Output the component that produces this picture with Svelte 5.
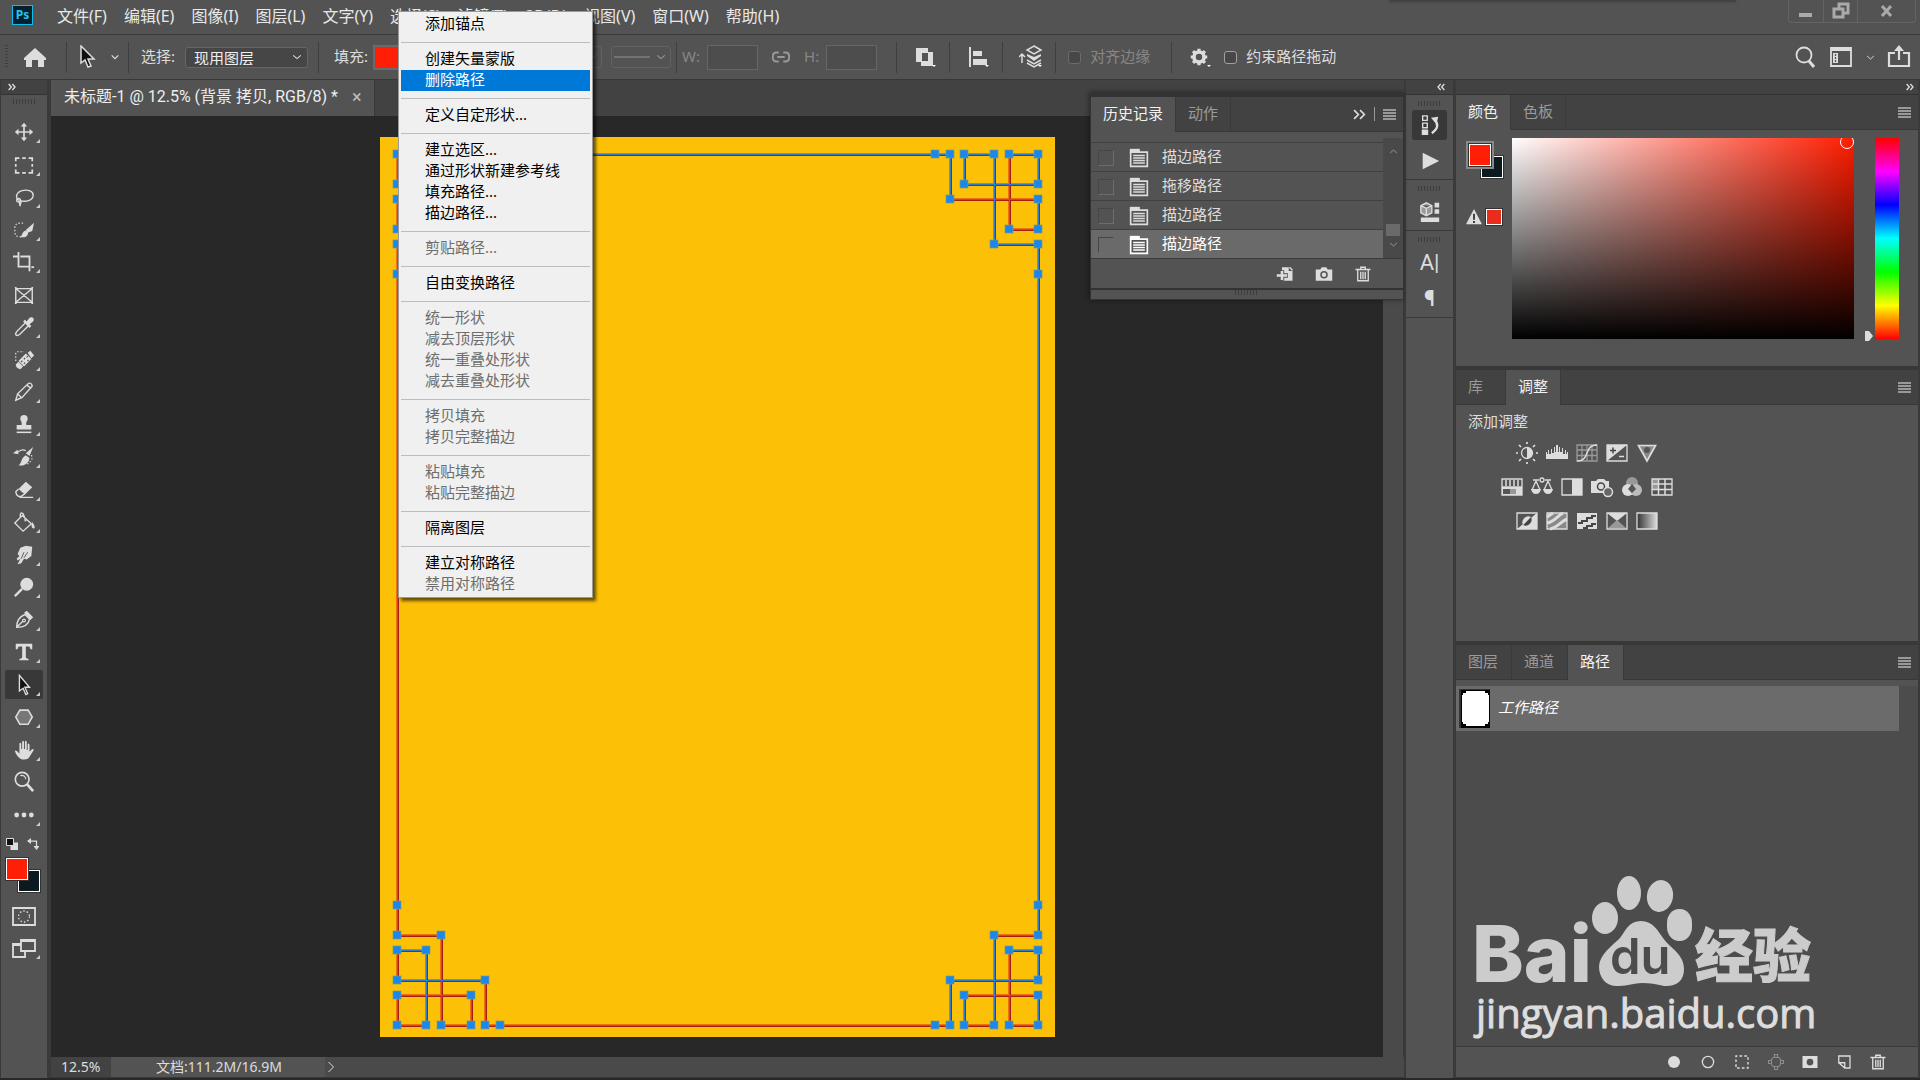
<script lang="ts">
	const menus = ['文件(F)', '编辑(E)', '图像(I)', '图层(L)', '文字(Y)', '选择(S)', '滤镜(T)', '3D(D)', '视图(V)', '窗口(W)', '帮助(H)'];

	// every icon is drawn on a 24x24 grid, stroked with currentColor
	const solid = 'fill="currentColor" stroke="none"';

	const tools = [
		{ name: '移动', more: true, icon: `<path d="M12 4v16M4 12h16" stroke-width="1.8"/><path ${solid} d="M12 2l3.5 4h-7zM12 22l3.5-4h-7zM2 12l4-3.5v7zM22 12l-4-3.5v7z"/>` },
		{ name: '矩形选框', more: true, icon: '<path d="M3 8V4.500h4M10 4.500h4M17 4.500h4V8M21 11v3M21 17v3.500h-4M14 20.500h-4M7 20.500H3V17M3 14v-3" stroke-width="1.900"/>' },
		{ name: '套索', more: true, icon: '<path d="M7 16c-5-3-4-9 3-11 7-1.500 12 1 12 5 0 5-7 8-14 6M8 16c1-3-4-3-4-.5s5 2.500 4 0c2 2 0 4-1 6M7 17c-.5 3 1 3 1 5" stroke-width="1.500"/>' },
		{ name: '快速选择', more: true, icon: `<path d="M11 4.500H7Q2 5 2 10v4q0 5 5 5.500h3" stroke-dasharray="1.500 2"/><path ${solid} d="M23 4l-2 9-5 2-2-3zM14 12.500l2.500 3c-1 5-6 5-9 4 3-1 2-6 6.500-7z"/>` },
		{ name: '裁剪', more: true, icon: '<path d="M6 1v16h12M0 6h5M8 6h10v16M20 17.500h3" stroke-width="2"/>' },
		{ name: '图框', more: false, icon: '<path d="M3 5h18v15H3zM3 5l18 15M21 5L3 20M2 4h2M20 4h2M2 21h2M20 21h2" stroke-width="1.500"/>' },
		{ name: '吸管', more: true, icon: `<path d="M13 8L4 17q-2 3-.5 4t4-1l9-9" stroke-width="1.500"/><path ${solid} d="M11 6l2-2 2 2 3-4c3-2 6 1 4 4l-4 3 2 2-2 2z"/>` },
		{ name: '污点修复', more: true, icon: `<path d="M3 13V5q0-2 2-2h7" stroke-dasharray="1.500 2"/><path ${solid} d="M16 4l3-2 4 5-3 3zM3 17l3-3 5 5-3 3q-5-1-5-5z"/><path ${solid} d="M14 5l6 6-8 8-6-6z"/><path d="M9 13l1 1M12 10l1 1M15 8l1 1M12 15l1 1M16 12l1 1" stroke="#535353" stroke-width="1.800"/>` },
		{ name: '铅笔', more: true, icon: '<path d="M3 21l2-7L17 2.500q3-1 4 3L10 18zM5 14l4 4M15 4.500l5 3.500" stroke-width="1.500"/>' },
		{ name: '仿制图章', more: true, icon: `<path ${solid} d="M8 5a4 4 0 018 0c0 3-2 3-1.500 7H20v5H4v-5h5.500C10 8 8 8 8 5z"/><path d="M4 20h16" stroke-width="1.700"/>` },
		{ name: '历史记录画笔', more: true, icon: `<path d="M5 7q4-4 9-2"/><path ${solid} d="M0 8l5-4 1 5zM22 1l-4 10-4-3zM14 10l4 3c-1 7-7 9-12 8 4-2 2-8 8-11z"/><path d="M20 10q3 5-5 10" stroke-dasharray="1.500 2"/>` },
		{ name: '橡皮擦', more: true, icon: `<path ${solid} d="M14 3l7 6-8 8-7-6z"/><path d="M6 11l-3 3q0 3 3 5h3l4-3M7 20h15" stroke-width="1.500"/>` },
		{ name: '油漆桶', more: true, icon: `<path d="M10 5l10 9-9 8-9-9zM8 7V4q0-3 3-1l2 5" stroke-width="1.500"/><path ${solid} d="M12 8l3 2-2 2zM21 12q5 7 1 7-3-1-1-7z"/>` },
		{ name: '涂抹', more: true, icon: `<path ${solid} d="M8 4l6-2 7 1-1 10-5 4-3-1-3 5-4 1 3-6-3 2-1-2 3-3-2-2z"/><path d="M12 9l-3 7M16 9l-4 6" stroke="#535353" stroke-width="1"/>` },
		{ name: '减淡', more: true, icon: `<circle cx="15" cy="9" r="7" ${solid}/><path d="M10 14l-8 8" stroke-width="2.500"/>` },
		{ name: '钢笔', more: true, icon: `<path d="M4 20C4 13 8 8 13 6l5 5c-1 6-6 9-14 9zM4 20l7-7" stroke-width="1.500"/><circle cx="12" cy="12.500" r="1.500"/><path ${solid} d="M12 4l3-2 7 7-3 3z"/>` },
		{ name: '横排文字', more: true, icon: `<path ${solid} d="M3 3h18v6h-2q0-3-2-3h-3v12q0 1 3 1.500V21H7v-1.500q3-.5 3-1.500V6H7Q5 6 5 9H3z"/>` },
		{ name: '路径选择', more: true, active: true, icon: '<path d="M7 1.500v17l4-3 3 7 2-1-3-7h5z" fill="#111" stroke-width="1.500"/>' },
		{ name: '多边形', more: true, icon: '<path d="M7.500 4.500h9L21 12l-4.500 8h-9L3 12z" fill="#777" stroke-width="1.700"/>' },
		{ name: '抓手', more: true, icon: `<path ${solid} d="M7 12V5q1-2 2 0v6h1V3q1-2 2 0v8h1V3q1-2 2 0v9h1V6q1-2 2 0v8l3-3q3 0 1 2l-5 8q-3 2-8 1-5-3-7-9 1-2 5 3z"/>` },
		{ name: '缩放', more: false, icon: '<circle cx="10" cy="9" r="7.500" stroke-width="1.800"/><path d="M8 5q5-1 6 4"/><path d="M15 14l7 8" stroke-width="3"/>' },
		{ name: '编辑工具栏', more: true, icon: `<g ${solid}><circle cx="4" cy="12" r="2.600"/><circle cx="12" cy="12" r="2.600"/><circle cx="20" cy="12" r="2.600"/></g>` }
	];

	const contextMenu = [
		[{ text: '添加锚点' }],
		[{ text: '创建矢量蒙版' }, { text: '删除路径', hot: true }],
		[{ text: '定义自定形状...' }],
		[{ text: '建立选区...' }, { text: '通过形状新建参考线' }, { text: '填充路径...' }, { text: '描边路径...' }],
		[{ text: '剪贴路径...', off: true }],
		[{ text: '自由变换路径' }],
		[{ text: '统一形状', off: true }, { text: '减去顶层形状', off: true }, { text: '统一重叠处形状', off: true }, { text: '减去重叠处形状', off: true }],
		[{ text: '拷贝填充', off: true }, { text: '拷贝完整描边', off: true }],
		[{ text: '粘贴填充', off: true }, { text: '粘贴完整描边', off: true }],
		[{ text: '隔离图层' }],
		[{ text: '建立对称路径' }, { text: '禁用对称路径', off: true }]
	];

	const history = ['描边路径', '拖移路径', '描边路径', '描边路径'];

	const box = '<path d="M2 4h20v16H2z"/>';
	const adjustments = [
		[
			{ name: '亮度/对比度', icon: `<circle cx="12" cy="12" r="5.500"/><path ${solid} d="M12 6.500a5.500 5.500 0 010 11z"/><path d="M12 1v2M12 21v2M1 12h2M21 12h2M4 4l2 2M18 18l2 2M20 4l-2 2M4 20l2-2" stroke-width="1.700"/>` },
			{ name: '色阶', icon: `<path ${solid} d="M1 18V11h1v2h1V9h1v4h2V8h1v4h2V6h1v5h1V4h2v7h1V6h1v5h2V7h1v6h2V9h1v4h1v-2h1v7z"/>` },
			{ name: '曲线', icon: '<path d="M2 4h20v16H2zM2 9h20M2 14.500h20M7 4v16M12 4v16M17 4v16" stroke="#999"/><path d="M2 20c14 0 6-16 20-16" stroke-width="1.500"/>' },
			{ name: '曝光度', icon: `${box}<path ${solid} d="M2 4h20L2 20z"/><path d="M5 9.500h6M8 6.500v6" stroke="#444" stroke-width="1.500"/><path d="M14 15.500h5" stroke-width="1.500"/>` },
			{ name: '自然饱和度', icon: '<path d="M3.500 4.500h17L12 20z" fill="#888" stroke-width="1.700"/><circle cx="12" cy="9" r="3" fill="#555" stroke="none"/>' }
		],
		[
			{ name: '色相/饱和度', icon: `<path ${solid} d="M2 12h20v8H2z"/><path d="M3 14h7v5H3z" fill="#555" stroke="none"/><path d="M10 14h6v5h-6z" fill="#999" stroke="none"/>${box}<path d="M6 5v6M10 5v6M14 5v6M18 5v6M2 12h20" stroke-width="1.500"/>` },
			{ name: '色彩平衡', icon: `<path d="M3 5h6M15 5h6M6 6l-4 9M6 6l4 9M18 6l-4 9M18 6l4 9"/><circle cx="12" cy="5" r="2"/><path ${solid} d="M1 14h10q-1 5-5 5t-5-5zM13 14h10q-1 5-5 5t-5-5z"/>` },
			{ name: '黑白', icon: `${box}<path ${solid} d="M12 4h10v16H12z"/>` },
			{ name: '照片滤镜', icon: `<path ${solid} d="M1 6h5l2-2h6l2 2h3v12H1z"/><circle cx="11" cy="11.500" r="3.500" stroke="#444" stroke-width="1.500"/><circle cx="18" cy="17" r="4.500" fill="#666" stroke-width="1.500"/>` },
			{ name: '通道混合器', icon: '<g stroke="none"><circle cx="12" cy="8" r="6" fill="#999"/><circle cx="8" cy="15" r="6" fill="#ddd"/><circle cx="16" cy="15" r="6" fill="#bbb"/><path d="M12 9l4 5-4 4-4-4z" fill="#555"/></g>' },
			{ name: '颜色查找', icon: `${box}<path ${solid} opacity=".5" d="M2 4h7v10H2z"/><path d="M2 9h20M2 14.500h20M8.500 4v16M15 4v16" stroke-width="1.500"/>` }
		],
		[
			{ name: '反相', icon: `${box}<path ${solid} d="M22 4v16H2z"/><path d="M16 8a6 6 0 01-8 8z" fill="#444" stroke="none"/><path ${solid} d="M16 8a6 6 0 00-8 8z"/>` },
			{ name: '色调分离', icon: `<path ${solid} opacity=".4" d="M2 4h20v16H2z"/>${box}<path d="M2 8l6-4M2 14c7-1 10-7 16-10M5 20c7-1 10-7 17-10" stroke-width="3"/>` },
			{ name: '阈值', icon: `<path ${solid} d="M2 4h20v16H2z"/><path d="M3 14h4v-2h5v-3h5V7h4M8 19h4v-2h5v-2h4" stroke="#444" stroke-width="2"/>` },
			{ name: '可选颜色', icon: `${box}<path ${solid} d="M2 4h20l-10 8z"/><path d="M3 19l9-8 9 8z" fill="#999" stroke="none"/>` },
			{ name: '渐变映射', icon: `<defs><linearGradient id="ramp"><stop stop-color="#333"/><stop offset="1" stop-color="#ddd"/></linearGradient></defs><path d="M2 4h20v16H2z" fill="url(#ramp)"/>` }
		]
	];

	const trash = '<path d="M2 6h20M5 7v14h14V7M9 5V3h6v2M9 9v10M12 9v10M15 9v10" stroke-width="1.800"/>';
	const pathActions = [
		{ name: '用前景色填充路径', icon: `<circle cx="12" cy="12" r="8" ${solid}/>` },
		{ name: '用画笔描边路径', icon: '<circle cx="12" cy="12" r="7.500" stroke-width="1.700"/>' },
		{ name: '将路径作为选区载入', icon: '<path d="M4 4h16v16H4z" stroke-dasharray="3.500 2.900" stroke-dashoffset="1.700" stroke-width="1.900"/>' },
		{ name: '从选区生成工作路径', icon: '<g stroke="#8c8c8c" stroke-width="1.500"><circle cx="12" cy="12" r="7"/><path fill="#535353" d="M10 2h4v4h-4zM10 18h4v4h-4zM2 10h4v4H2zM18 10h4v4h-4z"/></g>' },
		{ name: '添加蒙版', icon: `<path ${solid} d="M2 4h20v16H2z"/><circle cx="12" cy="12" r="4.500" fill="#535353" stroke="none"/>` },
		{ name: '创建新路径', icon: '<path d="M5 13V4h15v16h-7zM4 13h9v8" stroke-width="1.700"/>' },
		{ name: '删除当前路径', icon: trash }
	];

	// corner knots: one corner is described, the others mirror it
	const W = 675;
	const H = 900;
	const knot = [[17, 768], [17, 798], [61, 798], [61, 888], [91, 888], [91, 858], [17, 858], [17, 888], [46, 888], [46, 813], [17, 813], [17, 843], [105, 843], [105, 888], [120, 888]];
	const mirror = (fx: boolean, fy: boolean) => knot.map(([x, y]) => [fx ? W - x : x, fy ? H - y + 5 : y]);
	const corners = [mirror(false, false), mirror(true, false), mirror(true, true), mirror(false, true)];
	const outline = [
		...corners[0],
		...[...corners[1]].reverse(),
		...corners[2],
		...[...corners[3]].reverse()
	]
		.map((p) => p.join(','))
		.join(' ');
	const anchors = corners.flat();

	let layer = $state('现用图层');
</script>

{#snippet icon(body: string, size = 24)}
	<svg class="icon" viewBox="0 0 24 24" width={size} height={size} fill="none" stroke="currentColor" stroke-width="1.3" aria-hidden="true">{@html body}</svg>
{/snippet}

{#snippet burger()}
	<button class="burger" aria-label="面板菜单"><i></i><i></i><i></i><i></i></button>
{/snippet}

<div class="app">
	<header class="menubar">
		<div class="logo">Ps</div>
		<nav>
			{#each menus as item}
				<button>{item}</button>
			{/each}
		</nav>
		<div class="notch"></div>
		<div class="window">
			<button aria-label="最小化"><svg width="14" height="16"><path d="M0 10h13v4H0z" fill="#aaa" /></svg></button>
			<button aria-label="还原">
				<svg width="18" height="18" fill="none" stroke="#aaa" stroke-width="3"><path d="M7 6V2h9v9h-5M2 7h9v8H2z" /></svg>
			</button>
			<button aria-label="关闭"><svg width="14" height="14" stroke="#aaa" stroke-width="3"><path d="M2 2l9 10M11 2L2 12" /></svg></button>
		</div>
	</header>

	<div class="options">
		<span class="grip-v"></span>
		<button class="home" aria-label="主页">{@render icon(`<path ${solid} d="M12 2l11 10v2h-2v7h-6v-7H9v7H3v-7H1v-2z"/>`)}</button>
		<span class="sep flush"></span>
		<button class="current" aria-label="路径选择工具">
			{@render icon('<path d="M5 1v17l4-3 3 7 3-1-3-7h6z" fill="#111" stroke-width="1.5"/>')}
			{@render icon('<path d="M4 8l8 8 8-8" stroke-width="3"/>', 10)}
		</button>
		<span class="sep"></span>
		<label for="layer">选择:</label>
		<span class="select">
			<select id="layer" bind:value={layer}>
				<option>现用图层</option>
				<option>所有图层</option>
			</select>
			{@render icon('<path d="M3 8l9 8 9-8" stroke-width="2.5"/>', 10)}
		</span>
		<span class="sep"></span>
		<span class="fill-label">填充:</span>
		<button class="fill" aria-label="填充颜色"></button>
		<button class="dropdown" aria-label="描边宽度" disabled>{@render icon('<path d="M3 8l9 8 9-8" stroke-width="2.5"/>', 10)}</button>
		<button class="dropdown line" aria-label="描边类型" disabled>
			<i></i>{@render icon('<path d="M3 8l9 8 9-8" stroke-width="2.5"/>', 10)}
		</button>
		<span class="sep tight"></span>
		<label class="dim" for="w">W:</label>
		<input id="w" class="size" type="text" disabled />
		<span class="link">{@render icon('<path d="M9 6H6Q1 6 1 12t5 6h3M15 6h3q5 0 5 6t-5 6h-3M7 12h10" stroke-width="2.5"/>', 18)}</span>
		<label class="dim" for="h">H:</label>
		<input id="h" class="size" type="text" disabled />
		<span class="sep wide"></span>
		<button class="op" aria-label="路径操作">{@render icon(`<path ${solid} fill-rule="evenodd" d="M3 3h12v4h5v14H8v-4H3zM9 8v8h6V8z"/>`)}</button>
		<span class="sep"></span>
		<button class="op" aria-label="路径对齐方式">{@render icon(`<path d="M4 2v20" stroke-width="2"/><path ${solid} d="M7 6h9v5H7zM7 14h14v6H7z"/>`)}</button>
		<span class="sep"></span>
		<button class="op" aria-label="路径排列方式">
			{@render icon(`<path d="M3 9v9M0 12l3-3 3 3" stroke-width="1.5"/><path d="M15 1l7 4-7 4-7-4zM8 15l7 4 7-4M8 18l7 4 7-4" stroke-width="1.5"/><path ${solid} d="M8 9l7 3 7-3v2l-7 5-7-5z"/>`)}
		</button>
		<span class="sep"></span>
		<label class="check dim"><input type="checkbox" disabled />对齐边缘</label>
		<span class="sep end"></span>
		<button class="op" aria-label="设置">
			{@render icon(`<circle cx="12" cy="12" r="5.500" stroke-width="4"/><path d="M12 3v3M12 18v3M3 12h3M18 12h3M5.500 5.500l2 2M16.500 16.500l2 2M18.500 5.500l-2 2M5.500 18.500l2-2" stroke-width="3.500"/>`, 22)}
		</button>
		<label class="check"><input type="checkbox" />约束路径拖动</label>
		<div class="right">
			<button aria-label="搜索">{@render icon('<circle cx="11" cy="10" r="7.500" stroke-width="1.800"/><path d="M16 16l5 6" stroke-width="3"/>')}</button>
			<button aria-label="工作区">
				{@render icon(`<path d="M2 3h20v18H2zM2 5h20" stroke-width="1.800"/><path ${solid} d="M4 8h5v10H4z"/><path d="M6.500 9v8" stroke="#535353" stroke-dasharray="2 1"/>`)}
				{@render icon('<path d="M3 8l9 8 9-8" stroke-width="2.5"/>', 9)}
			</button>
			<button aria-label="共享">{@render icon(`<path d="M8 8H2v13h20V8h-6M12 15V4" stroke-width="2.200"/><path ${solid} d="M12 0l5 6H7z"/>`)}</button>
		</div>
	</div>

	<main>
		<aside class="toolbox">
			<button class="collapse" aria-label="展开工具栏">{@render icon('<path d="M2 3l8 9-8 9M13 3l8 9-8 9" stroke-width="4"/>', 8)}</button>
			<span class="grip"></span>
			<div class="tools">
				{#each tools as tool}
					<button class:active={tool.active} aria-label={tool.name}>
						{@render icon(tool.icon, 22)}
						{#if tool.more}<i class="more"></i>{/if}
					</button>
				{/each}
			</div>
			<div class="mini">
				<button aria-label="默认颜色">{@render icon(`<path ${solid} d="M9 9h15v15H9z"/><path d="M1 1h14v14H1z" fill="#111" stroke-width="2"/>`, 12)}</button>
				<button aria-label="切换颜色">{@render icon(`<path d="M6 6h13v13" stroke-width="2.500"/><path ${solid} d="M0 6l8-6v12zM13 16h12l-6 8z"/>`, 12)}</button>
			</div>
			<div class="swatches">
				<button class="bg" aria-label="背景色"></button>
				<button class="fg" aria-label="前景色"></button>
			</div>
			<div class="modes">
				<button aria-label="快速蒙版">{@render icon('<path d="M1 4h22v17H1z" stroke-width="1.800"/><circle cx="12" cy="12.500" r="5.500" stroke-dasharray="1.500 2"/>')}</button>
				<button aria-label="屏幕模式">
					{@render icon('<path d="M1 8h12v13H1zM1 9h8" stroke-width="1.800"/><path d="M9 4h14v11H9zM9 5h14" fill="#535353" stroke-width="1.800"/>')}
					<i class="more"></i>
				</button>
			</div>
		</aside>

		<section class="document">
			<div class="doctabs">
				<div class="doctab">未标题-1 @ 12.5% (背景 拷贝, RGB/8) * <button aria-label="关闭文档">×</button></div>
			</div>
			<div class="stage">
				<div class="canvas">
					<svg class="paper" width={W} height={H} viewBox="0 0 {W} {H}">
						<rect width={W} height={H} fill="#fcc107" />
						<g fill="none" shape-rendering="crispEdges">
							<polygon points={outline} stroke="#f0700f" stroke-width="3" />
							<polygon points={outline} stroke="#a32016" stroke-width="1" transform="translate(1 1)" />
							<polygon points={outline} stroke="#2f78cf" stroke-width="1" />
						</g>
						{#each anchors as [x, y]}
							<rect x={x - 4} y={y - 4} width="8" height="8" fill="#1a86ee" stroke="#7a9f7a" stroke-opacity=".7" />
						{/each}
					</svg>
				</div>
				<div class="vscroll"></div>
			</div>
			<div class="status">
				<span class="zoom">12.5%</span>
				<span class="docinfo">文档:111.2M/16.9M</span>
				{@render icon('<path d="M7 2l10 10L7 22" stroke-width="2"/>', 12)}
			</div>

			<div class="history">
				<div class="tabs">
					<button class="tab on">历史记录</button>
					<button class="tab">动作</button>
					<span class="arrows">{@render icon('<path d="M2 4l8 8-8 8M13 4l8 8-8 8" stroke-width="3"/>', 13)}</span>
					<span class="bar"></span>
					{@render burger()}
				</div>
				<div class="list">
					<ul>
						{#each history as step, i}
							<li class:on={i === history.length - 1}>
								<input type="checkbox" aria-label={step} />
								{@render icon(`<path d="M2 5h20v17H2z" fill="#555" stroke-width="2"/><path ${solid} d="M1 1h12v5H1z"/><path d="M5 9h14M5 12h14M5 15h14M5 18h14" stroke-width="1.600"/>`, 20)}
								<span>{step}</span>
							</li>
						{/each}
					</ul>
					<div class="track">
						{@render icon('<path d="M3 16l9-8 9 8" stroke-width="2.5"/>', 9)}
						<i></i>
						{@render icon('<path d="M3 8l9 8 9-8" stroke-width="2.5"/>', 9)}
					</div>
				</div>
				<div class="actions">
					<button aria-label="从当前状态创建新文档">{@render icon(`<path ${solid} d="M8 3h9v5h5v13H8z"/><path d="M18 3l4 4" stroke-width="2"/><path d="M0 14h16M8 7v14" stroke="#535353" stroke-width="6"/><path d="M1 14h14M8 8v12" stroke-width="3.500"/>`, 18)}</button>
					<button aria-label="创建新快照">{@render icon(`<path ${solid} d="M1 6h6l2-3h6l2 3h6v15H1z"/><circle cx="12" cy="13" r="4" stroke="#535353" stroke-width="2"/>`, 18)}</button>
					<button aria-label="删除当前状态">{@render icon(trash, 18)}</button>
				</div>
				<div class="resize"><span class="grip"></span></div>
			</div>
		</section>

		<aside class="dock">
			<button class="collapse" aria-label="展开面板">{@render icon('<path d="M11 3l-8 9 8 9M22 3l-8 9 8 9" stroke-width="4"/>', 8)}</button>
			<div class="group">
				<span class="grip"></span>
				<button class="active" aria-label="历史记录">
					{@render icon(`<path d="M4 2h5v5H4zM4 10h5v5H4z" stroke-width="1.500"/><path ${solid} d="M3 17h7v6H3zM13 4l8-1-2 8z"/><path d="M17 6q7 8-3 15" stroke-width="2.500"/>`, 22)}
				</button>
				<button aria-label="动作">{@render icon(`<path ${solid} d="M4 3l18 9-18 9z"/>`, 22)}</button>
			</div>
			<div class="group">
				<span class="grip"></span>
				<button aria-label="3D">
					{@render icon(`<path d="M8 2l6 3v8l-6 3-6-3V5zM2 5l6 3 6-3M8 8v8" fill="#999" stroke-width="1.500"/><path ${solid} d="M17 2h5v5h-5zM17 9h5v5h-5zM2 18h20v5H2z"/>`, 22)}
				</button>
			</div>
			<div class="group">
				<span class="grip"></span>
				<button class="glyph" aria-label="字符">A|</button>
				<button class="glyph mark" aria-label="段落">¶</button>
			</div>
		</aside>

		<aside class="panels">
			<button class="collapse" aria-label="折叠面板">{@render icon('<path d="M2 3l8 9-8 9M13 3l8 9-8 9" stroke-width="4"/>', 8)}</button>

			<section class="panel">
				<div class="tabs">
					<button class="tab on">颜色</button>
					<button class="tab">色板</button>
					{@render burger()}
				</div>
				<div class="color">
					<div class="chips">
						<div class="swatches">
							<button class="bg" aria-label="背景色"></button>
							<button class="fg ring" aria-label="前景色"></button>
						</div>
						<div class="gamut">
							{@render icon(`<path ${solid} d="M12 0l12 23H0z"/><path d="M12 7v9M12 18v3" stroke="#444" stroke-width="3"/>`, 16)}
							<button aria-label="色域内最接近的颜色"></button>
						</div>
					</div>
					<div class="field"><i></i></div>
					<div class="hue"><svg width="10" height="12"><path d="M1 1h4l4 5-4 5H1z" fill="#ddd" /></svg></div>
				</div>
			</section>

			<section class="panel">
				<div class="tabs">
					<button class="tab single">库</button>
					<button class="tab on">调整</button>
					{@render burger()}
				</div>
				<div class="adjust">
					<p>添加调整</p>
					{#each adjustments as row}
						<div class="row" class:long={row.length === 6}>
							{#each row as item}
								<button aria-label={item.name}>{@render icon(item.icon)}</button>
							{/each}
						</div>
					{/each}
				</div>
			</section>

			<section class="panel paths">
				<div class="tabs">
					<button class="tab">图层</button>
					<button class="tab">通道</button>
					<button class="tab on">路径</button>
					{@render burger()}
				</div>
				<div class="pathlist">
					<div class="path">
						<svg width="31" height="39">
							<rect width="31" height="39" fill="#333" />
							<rect x="2" y="1" width="29" height="38" fill="#000" />
							<path d="M7 2h19v2h3v2h1v27h-1v2h-3v2H7v-2H4v-2H3V6h1V4h3z" fill="#fff" />
						</svg>
						<em>工作路径</em>
					</div>
					<svg class="watermark" width="350" height="168" viewBox="0 0 350 168">
						<g fill="#ccc">
							<text class="brand" x="-2" y="107">Bai</text>
							<ellipse cx="131" cy="43" rx="13" ry="16" />
							<ellipse cx="155" cy="18" rx="12" ry="17" />
							<ellipse cx="186" cy="21" rx="13" ry="16" transform="rotate(10 186 21)" />
							<rect x="193" y="34" width="25" height="32" rx="12" ry="14" />
							<path d="M167 46c12 0 17 10 22 17 8 11 21 16 21 31 0 13-9 18-20 17-8-2-14-3-22-3s-14 3-23 3c-13 1-20-8-20-20 1-12 13-20 21-28 6-8 9-17 21-17z" />
							<text class="cn" x="221" y="102">经验</text>
						</g>
						<text class="du" x="136" y="99">du</text>
						<text class="site" x="2" y="153">jingyan.baidu.com</text>
					</svg>
				</div>
				<div class="actions">
					{#each pathActions as action}
						<button aria-label={action.name}>{@render icon(action.icon, 18)}</button>
					{/each}
				</div>
			</section>
		</aside>
	</main>

	<div class="context" role="menu">
		{#each contextMenu as group}
			<div class="items">
				{#each group as item}
					<button role="menuitem" class:hot={item.hot} disabled={item.off}>{item.text}</button>
				{/each}
			</div>
		{/each}
	</div>
</div>

<style>
	:global(body) {
		margin: 0;
		background: #282828;
	}
	.app {
		position: relative;
		display: flex;
		flex-direction: column;
		box-sizing: border-box;
		min-height: 100vh;
		padding-bottom: 2px;
		overflow: hidden;
		color: #ddd;
		font-family: 'Noto Sans', 'Noto Sans CJK SC', sans-serif;
		font-size: 15px;
		line-height: 20px;
	}
	button {
		display: flex;
		align-items: center;
		justify-content: center;
		padding: 0;
		border: 0;
		background: none;
		color: inherit;
		font: inherit;
	}
	.icon {
		display: block;
		flex: none;
	}

	/* menu bar */
	.menubar {
		display: flex;
		align-items: center;
		height: 34px;
		padding-left: 12px;
		border-bottom: 1px solid #3c3c3c;
		background: #535353;
		font-size: 16px;
	}
	.logo {
		box-sizing: border-box;
		width: 21px;
		height: 20px;
		margin: 0 24px 4px 0;
		border: 1px solid #16b9e8;
		background: #03202d;
		color: #22c5f5;
		font-size: 12px;
		font-weight: 700;
		line-height: 17px;
		text-align: center;
	}
	nav {
		display: flex;
		gap: 17px;
		padding-bottom: 2px;
		color: #e8e8e8;
	}
	.notch {
		align-self: flex-start;
		width: 347px;
		height: 2px;
		margin-left: auto;
		background: #434343;
		box-shadow: 0 0 3px #434343;
	}
	.window {
		display: flex;
		align-self: flex-start;
		height: 22px;
		margin: 0 4px 0 52px;
		border: 1px solid #646464;
		border-top: 0;
		border-radius: 0 0 4px 4px;
	}
	.window button {
		width: 34px;
		border-left: 1px solid #646464;
	}
	.window button:first-child {
		border-left: 0;
	}
	.window button:last-child {
		width: 58px;
	}

	/* options bar */
	.options {
		display: flex;
		align-items: center;
		height: 44px;
		padding-left: 5px;
		border-bottom: 1px solid #383838;
		background: #535353;
	}
	.options label,
	.fill-label {
		padding-bottom: 2px;
	}
	.grip-v {
		width: 3px;
		height: 24px;
		background: repeating-linear-gradient(#3e3e3e 0 1px, transparent 1px 3px);
	}
	.home {
		width: 58px;
		padding: 2px 4px 0 0;
	}
	.sep {
		width: 1px;
		height: 31px;
		margin-right: 12px;
		background: #3f3f3f;
	}
	.sep.flush {
		margin-right: 0;
	}
	.sep.tight {
		margin: 0 5px;
	}
	.sep.wide {
		margin-left: 19px;
	}
	.sep.end {
		margin-left: 21px;
	}
	.current {
		gap: 10px;
		width: 61px;
	}
	.select {
		display: flex;
		align-items: center;
		margin: 0 10px 0 10px;
		padding-right: 5px;
		border: 1px solid #666;
		border-radius: 3px;
		background: #464646;
	}
	select {
		width: 106px;
		height: 19px;
		padding: 0 0 2px 8px;
		border: 0;
		appearance: none;
		background: none;
		color: #eee;
		font: inherit;
	}
	.fill-label {
		margin-left: 3px;
	}
	.fill {
		width: 52px;
		height: 25px;
		margin: 0 117px 0 5px;
		border: 2px solid #6a6a6a;
		background: #ff1f07;
	}
	.dropdown {
		width: 60px;
		height: 22px;
		margin-right: 9px;
		justify-content: flex-end;
		padding-right: 4px;
		border: 1px solid #626262;
		border-radius: 3px;
		color: #777;
	}
	.dropdown.line {
		gap: 6px;
		margin-right: 0;
		color: #999;
	}
	.dropdown i {
		width: 36px;
		height: 2px;
		background: #727272;
	}
	.dim {
		color: #878787;
	}
	.size {
		box-sizing: border-box;
		width: 51px;
		height: 25px;
		margin-left: 7px;
		border: 1px solid #666;
		background: #4d4d4d;
	}
	.link {
		margin: 0 14px;
		color: #999;
	}
	.op {
		position: relative;
		width: 38px;
		height: 30px;
		margin-left: 4px;
		margin-right: 4px;
	}
	.sep + .op {
		margin-left: 0;
		justify-content: flex-start;
		width: 40px;
		padding-left: 4px;
		margin-right: 0;
	}
	.op::after {
		content: '';
		position: absolute;
		bottom: 3px;
		left: 23px;
		border: 2px solid transparent;
		border-top-color: #fff;
	}
	.check {
		display: flex;
		align-items: center;
		gap: 9px;
	}
	.check input {
		width: 13px;
		height: 13px;
		margin: 2px 0 0;
		border: 1px solid #a0a0a0;
		border-radius: 3px;
		appearance: none;
		background: #474747;
	}
	.check.dim input {
		border-color: #6c6c6c;
	}
	.right {
		display: flex;
		gap: 12px;
		margin-left: auto;
		padding-right: 9px;
	}
	.right button {
		gap: 13px;
	}

	main {
		display: grid;
		flex: 1;
		grid-template-columns: 51px minmax(0, 1fr) 52px 464px;
	}
	.grip {
		display: block;
		width: 24px;
		height: 5px;
		background: repeating-linear-gradient(90deg, #3c3c3c 0 1px, transparent 1px 3px);
	}
	.collapse {
		width: 100%;
		height: 15px;
		border-bottom: 1px solid #333;
		background: #424242;
	}

	/* toolbox */
	.toolbox {
		box-sizing: border-box;
		border: solid #3a3a3a;
		border-width: 0 4px 0 1px;
		background: #535353;
	}
	.toolbox .collapse {
		justify-content: flex-start;
		padding-left: 7px;
	}
	.toolbox > .grip {
		margin: 4px 0 0 12px;
	}
	.tools {
		display: flex;
		flex-direction: column;
		padding-top: 12px;
	}
	.tools button,
	.modes button {
		position: relative;
		width: 46px;
		height: 32px;
	}
	.tools button:nth-child(even) {
		height: 33px;
	}
	.tools .active {
		width: 38px;
		height: 29px !important;
		margin: 2px 4px;
		border-radius: 2px;
		background: #383838;
	}
	.more {
		position: absolute;
		right: 7px;
		bottom: 5px;
		border: 2px solid;
		border-color: transparent #ccc #ccc transparent;
	}
	.active .more {
		right: 3px;
		bottom: 3px;
	}
	.mini {
		display: flex;
		gap: 9px;
		padding: 7px 0 0 5px;
	}
	.swatches {
		position: relative;
		width: 36px;
		height: 36px;
	}
	.toolbox .swatches {
		margin: 7px 0 7px 4px;
	}
	.swatches button {
		position: absolute;
		width: 24px;
		height: 24px;
		border: 1px solid #333;
		box-shadow: inset 0 0 0 1px #fff;
	}
	.fg {
		top: 0;
		left: 0;
		background: #ff1f07;
	}
	.bg {
		right: 0;
		bottom: 0;
		background: #0a1a1e;
	}
	.swatches .ring {
		outline: 2px solid #888;
	}

	/* document */
	.document {
		position: relative;
		display: flex;
		flex-direction: column;
		background: #282828;
	}
	.doctabs {
		display: flex;
		height: 36px;
		background: #424242;
	}
	.doctab {
		display: flex;
		align-items: center;
		gap: 10px;
		padding: 0 12px 2px 13px;
		border-right: 1px solid #383838;
		background: #535353;
		color: #eee;
		font-family: Roboto, 'Noto Sans CJK SC', sans-serif;
		font-size: 16px;
		white-space: pre;
	}
	.doctab button {
		color: #bbb;
		font-size: 18px;
	}
	.stage {
		display: flex;
		flex: 1;
	}
	.canvas {
		display: flex;
		flex: 1;
		align-items: center;
		justify-content: center;
	}
	.paper {
		display: block;
	}
	.vscroll {
		width: 20px;
		border-right: 1px solid #383838;
		background: #4a4a4a;
	}
	.status {
		display: flex;
		align-items: center;
		height: 20px;
		border-bottom: 1px solid #383838;
		background: #4a4a4a;
		font-size: 14px;
	}
	.zoom {
		box-sizing: border-box;
		width: 60px;
		padding-left: 10px;
		background: #424242;
	}
	.docinfo {
		box-sizing: border-box;
		width: 214px;
		padding-left: 45px;
		background: #535353;
	}

	/* tab strips */
	.tabs {
		display: flex;
		align-items: center;
		box-sizing: border-box;
		height: 35px;
		padding-right: 7px;
		border-bottom: 1px solid #383838;
		background: #424242;
	}
	.tab {
		box-sizing: border-box;
		height: 35px;
		padding: 0 12px 2px;
		border-right: 1px solid #3a3a3a;
		color: #9a9a9a;
	}
	.tab.on {
		background: #535353;
		color: #f2f2f2;
	}
	.tab.single {
		padding-right: 22px;
	}
	.paths .tab {
		padding-right: 13px;
	}
	.burger {
		flex-direction: column;
		gap: 1px;
		margin-left: auto;
	}
	.burger i {
		width: 13px;
		height: 2px;
		background: #999;
	}

	/* floating history panel */
	.history {
		position: absolute;
		top: 12px;
		right: 0;
		box-sizing: border-box;
		width: 314px;
		border: solid #333;
		border-width: 5px 1px 1px;
		background: #535353;
		box-shadow: -1px 0 5px #0006;
	}
	.arrows {
		margin-left: auto;
	}
	.bar {
		width: 1px;
		height: 14px;
		margin: 0 8px;
		background: #999;
	}
	.history .burger {
		margin-left: 0;
	}
	.list {
		display: flex;
		padding-top: 6px;
		border-bottom: 1px solid #3a3a3a;
	}
	ul {
		flex: 1;
		margin: 0;
		padding: 4px 0 0;
		list-style: none;
	}
	li {
		display: flex;
		align-items: center;
		box-sizing: border-box;
		height: 29px;
		padding-left: 7px;
		border-top: 1px solid #404040;
	}
	li .icon {
		margin: 2px 13px 0 15px;
	}
	li span {
		padding-bottom: 3px;
	}
	li.on {
		background: #6a6a6a;
		color: #fff;
	}
	li input {
		width: 16px;
		height: 16px;
		margin: 2px 0 0;
		border: 1px solid #464646;
		border-color: #464646 #6c6c6c #6c6c6c #464646;
		appearance: none;
	}
	.track {
		display: flex;
		flex-direction: column;
		align-items: center;
		width: 20px;
		padding: 9px 0 9px;
		box-sizing: border-box;
		background: #494949;
		color: #999;
	}
	.track i {
		width: 14px;
		height: 12px;
		margin: auto 0 4px;
		background: #6a6a6a;
	}
	.actions {
		display: flex;
		align-items: center;
		justify-content: flex-end;
		gap: 16px;
		height: 30px;
		padding-right: 31px;
	}
	.history .actions {
		gap: 21px;
		height: 29px;
	}
	.resize {
		display: flex;
		justify-content: center;
		height: 9px;
		border-top: 2px solid #333;
	}

	/* icon dock */
	.dock {
		box-sizing: border-box;
		border: solid #3a3a3a;
		border-width: 0 3px 0 2px;
		background: #535353;
	}
	.dock .collapse {
		justify-content: flex-end;
		padding-right: 8px;
	}
	.group {
		display: flex;
		flex-direction: column;
		align-items: center;
		gap: 6px;
		padding: 6px 0 3px;
		border-bottom: 1px solid #3a3a3a;
	}
	.group button {
		width: 35px;
		height: 30px;
	}
	.group .active {
		margin-top: -2px;
		border-radius: 3px;
		background: #383838;
	}
	.glyph {
		font-family: Roboto, sans-serif;
		font-size: 22px;
	}
	.mark {
		font-weight: 700;
	}

	/* right-hand panels */
	.panels {
		display: flex;
		flex-direction: column;
		border-right: 2px solid #3a3a3a;
		background: #535353;
	}
	.panels .collapse {
		flex: none;
		justify-content: flex-end;
		padding-right: 4px;
	}
	.panel {
		border-bottom: 4px solid #383838;
	}
	.color {
		display: flex;
		height: 201px;
		padding: 8px 19px 27px 12px;
	}
	.chips {
		width: 44px;
		padding-top: 5px;
	}
	.gamut {
		display: flex;
		align-items: center;
		gap: 3px;
		margin: 29px 0 0 -2px;
	}
	.gamut button {
		width: 18px;
		height: 18px;
		border: 1px solid #333;
		background: #e92c1b;
		box-shadow: inset 0 0 0 1px #fff;
	}
	.field {
		position: relative;
		flex: 1;
		overflow: hidden;
		background: linear-gradient(transparent, #000), linear-gradient(90deg, #fff, #ff1c00);
	}
	.field i {
		position: absolute;
		top: -3px;
		right: 0;
		width: 12px;
		height: 12px;
		border: 1px solid #fff;
		border-radius: 50%;
	}
	.hue {
		position: relative;
		width: 24px;
		margin-left: 21px;
		background: linear-gradient(#f00, #f0f, #00f, #0ff, #0f0, #ff0, #f00);
	}
	.hue svg {
		position: absolute;
		bottom: -3px;
		left: -11px;
	}
	.adjust {
		box-sizing: border-box;
		height: 236px;
		padding: 6px 12px;
	}
	.adjust p {
		margin: 0 0 10px;
	}
	.row {
		display: flex;
		gap: 6px;
		margin-bottom: 10px;
		padding-left: 47px;
	}
	.row.long {
		padding-left: 32px;
	}
	.paths {
		display: flex;
		flex: 1;
		flex-direction: column;
		border-bottom-width: 1px;
	}
	.pathlist {
		position: relative;
		flex: 1;
		padding-right: 19px;
		border-top: 6px solid #535353;
		border-bottom: 1px solid #3a3a3a;
		background: #4c4c4c;
	}
	.path {
		display: flex;
		align-items: center;
		gap: 8px;
		height: 45px;
		padding-left: 3px;
		background: #6b6b6b;
		color: #fff;
	}
	.path em {
		padding-bottom: 4px;
	}
	.watermark {
		position: absolute;
		bottom: 3px;
		left: 18px;
		overflow: visible;
	}
	.brand {
		font: 800 78px Inter, sans-serif;
	}
	.du {
		fill: #4c4c4c;
		font: 600 49px Inter, sans-serif;
	}
	.cn {
		stroke: #ccc;
		font: 900 58px 'Noto Sans CJK SC', sans-serif;
	}
	.site {
		fill: #ddd;
		stroke: #ddd;
		font: 400 40px 'Open Sans', sans-serif;
	}

	/* context menu */
	.context {
		position: absolute;
		top: 11px;
		left: 398px;
		box-sizing: border-box;
		width: 195px;
		padding: 2px;
		border: 1px solid #999;
		background: #f0f0f0;
		box-shadow: 3px 3px 3px #0009;
	}
	.items + .items {
		margin-top: 7px;
		padding-top: 6px;
		border-top: 1px solid #bdbdbd;
	}
	.context button {
		justify-content: flex-start;
		width: 100%;
		height: 21px;
		padding: 0 0 3px 24px;
		color: #000;
		white-space: nowrap;
	}
	.context .hot {
		background: #0078d7;
		color: #fff;
	}
	.context button:disabled {
		color: #6d6d6d;
	}
</style>
